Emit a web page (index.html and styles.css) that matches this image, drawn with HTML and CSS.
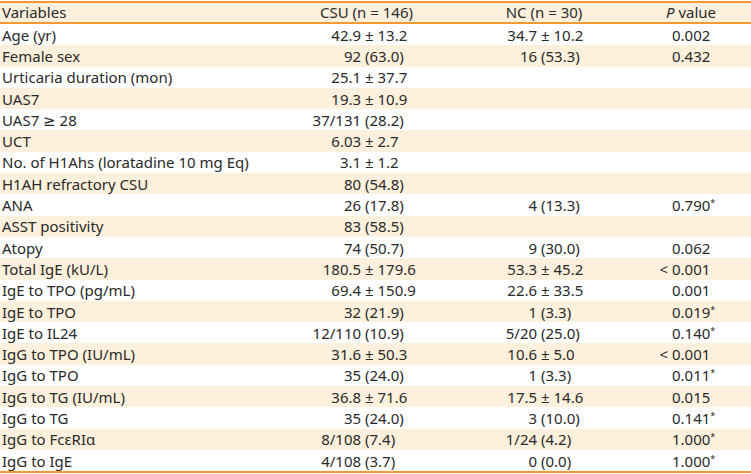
FILE: index.html
```html
<!DOCTYPE html>
<html>
<head>
<meta charset="utf-8">
<link rel="stylesheet" href="styles.css">
</head>
<body>
<div class="table">
  <div class="row head">
    <div class="cell var">Variables</div>
    <div class="cell hc">CSU (n = 146)</div>
    <div class="cell hc">NC (n = 30)</div>
    <div class="cell hc"><i>P</i> value</div>
  </div>
  <div class="row"><div class="cell var">Age (yr)</div><div class="cell csu"><span class="l">42.9 </span><span class="r">± 13.2</span></div><div class="cell nc"><span class="l">34.7 </span><span class="r">± 10.2</span></div><div class="cell pv"><span class="l"></span><span class="r">0.002</span></div></div>
  <div class="row alt"><div class="cell var">Female sex</div><div class="cell csu"><span class="l">92 </span><span class="r">(63.0)</span></div><div class="cell nc"><span class="l">16 </span><span class="r">(53.3)</span></div><div class="cell pv"><span class="l"></span><span class="r">0.432</span></div></div>
  <div class="row"><div class="cell var">Urticaria duration (mon)</div><div class="cell csu"><span class="l">25.1 </span><span class="r">± 37.7</span></div><div class="cell nc"></div><div class="cell pv"></div></div>
  <div class="row alt"><div class="cell var">UAS7</div><div class="cell csu"><span class="l">19.3 </span><span class="r">± 10.9</span></div><div class="cell nc"></div><div class="cell pv"></div></div>
  <div class="row"><div class="cell var">UAS7 ≥ 28</div><div class="cell csu"><span class="l">37/131 </span><span class="r">(28.2)</span></div><div class="cell nc"></div><div class="cell pv"></div></div>
  <div class="row alt"><div class="cell var">UCT</div><div class="cell csu"><span class="l">6.03 </span><span class="r">± 2.7</span></div><div class="cell nc"></div><div class="cell pv"></div></div>
  <div class="row"><div class="cell var">No. of H1Ahs (loratadine 10 mg Eq)</div><div class="cell csu"><span class="l">3.1 </span><span class="r">± 1.2</span></div><div class="cell nc"></div><div class="cell pv"></div></div>
  <div class="row alt"><div class="cell var">H1AH refractory CSU</div><div class="cell csu"><span class="l">80 </span><span class="r">(54.8)</span></div><div class="cell nc"></div><div class="cell pv"></div></div>
  <div class="row"><div class="cell var">ANA</div><div class="cell csu"><span class="l">26 </span><span class="r">(17.8)</span></div><div class="cell nc"><span class="l">4 </span><span class="r">(13.3)</span></div><div class="cell pv"><span class="l"></span><span class="r">0.790<sup>*</sup></span></div></div>
  <div class="row alt"><div class="cell var">ASST positivity</div><div class="cell csu"><span class="l">83 </span><span class="r">(58.5)</span></div><div class="cell nc"></div><div class="cell pv"></div></div>
  <div class="row"><div class="cell var">Atopy</div><div class="cell csu"><span class="l">74 </span><span class="r">(50.7)</span></div><div class="cell nc"><span class="l">9 </span><span class="r">(30.0)</span></div><div class="cell pv"><span class="l"></span><span class="r">0.062</span></div></div>
  <div class="row alt"><div class="cell var">Total IgE (kU/L)</div><div class="cell csu"><span class="l">180.5 </span><span class="r">± 179.6</span></div><div class="cell nc"><span class="l">53.3 </span><span class="r">± 45.2</span></div><div class="cell pv"><span class="l">&lt; </span><span class="r">0.001</span></div></div>
  <div class="row"><div class="cell var">IgE to TPO (pg/mL)</div><div class="cell csu"><span class="l">69.4 </span><span class="r">± 150.9</span></div><div class="cell nc"><span class="l">22.6 </span><span class="r">± 33.5</span></div><div class="cell pv"><span class="l"></span><span class="r">0.001</span></div></div>
  <div class="row alt"><div class="cell var">IgE to TPO</div><div class="cell csu"><span class="l">32 </span><span class="r">(21.9)</span></div><div class="cell nc"><span class="l">1 </span><span class="r">(3.3)</span></div><div class="cell pv"><span class="l"></span><span class="r">0.019<sup>*</sup></span></div></div>
  <div class="row"><div class="cell var">IgE to IL24</div><div class="cell csu"><span class="l">12/110 </span><span class="r">(10.9)</span></div><div class="cell nc"><span class="l">5/20 </span><span class="r">(25.0)</span></div><div class="cell pv"><span class="l"></span><span class="r">0.140<sup>*</sup></span></div></div>
  <div class="row alt"><div class="cell var">IgG to TPO (IU/mL)</div><div class="cell csu"><span class="l">31.6 </span><span class="r">± 50.3</span></div><div class="cell nc"><span class="l">10.6 </span><span class="r">± 5.0</span></div><div class="cell pv"><span class="l">&lt; </span><span class="r">0.001</span></div></div>
  <div class="row"><div class="cell var">IgG to TPO</div><div class="cell csu"><span class="l">35 </span><span class="r">(24.0)</span></div><div class="cell nc"><span class="l">1 </span><span class="r">(3.3)</span></div><div class="cell pv"><span class="l"></span><span class="r">0.011<sup>*</sup></span></div></div>
  <div class="row alt"><div class="cell var">IgG to TG (IU/mL)</div><div class="cell csu"><span class="l">36.8 </span><span class="r">± 71.6</span></div><div class="cell nc"><span class="l">17.5 </span><span class="r">± 14.6</span></div><div class="cell pv"><span class="l"></span><span class="r">0.015</span></div></div>
  <div class="row"><div class="cell var">IgG to TG</div><div class="cell csu"><span class="l">35 </span><span class="r">(24.0)</span></div><div class="cell nc"><span class="l">3 </span><span class="r">(10.0)</span></div><div class="cell pv"><span class="l"></span><span class="r">0.141<sup>*</sup></span></div></div>
  <div class="row alt"><div class="cell var">IgG to FcεRIα</div><div class="cell csu"><span class="l">8/108 </span><span class="r">(7.4)</span></div><div class="cell nc"><span class="l">1/24 </span><span class="r">(4.2)</span></div><div class="cell pv"><span class="l"></span><span class="r">1.000<sup>*</sup></span></div></div>
  <div class="row"><div class="cell var">IgG to IgE</div><div class="cell csu"><span class="l">4/108 </span><span class="r">(3.7)</span></div><div class="cell nc"><span class="l">0 </span><span class="r">(0.0)</span></div><div class="cell pv"><span class="l"></span><span class="r">1.000<sup>*</sup></span></div></div>
</div>
</body>
</html>
```
FILE: styles.css
```css
html, body {
  margin: 0;
  padding: 0;
  background: #ffffff;
}
body {
  font-family: "Noto Sans", "DejaVu Sans", sans-serif;
  font-size: 15px;
  color: #2a2a2a;
}
.table {
  margin-top: 1px;
  border-top: 2px solid #f39a32;
  border-bottom: 2px solid #f39a32;
  width: 751px;
}
.row {
  display: grid;
  grid-template-columns: 276px 181px 174px 120px;
  height: 21.3px;
  align-items: center;
  white-space: nowrap;
}
.row.head {
  height: 19px;
  background: #fdf0dc;
  border-bottom: 2px solid #f39a32;
}
.row.head .cell {
  line-height: 17px;
}
.row.alt {
  background: #fdf0dc;
}
.cell {
  line-height: 20px;
}
.cell.var {
  padding-left: 2px;
}
.cell.hc {
  text-align: center;
}
.cell.csu, .cell.nc, .cell.pv {
  display: grid;
}
.cell.csu { grid-template-columns: 89px 1fr; }
.cell.nc { grid-template-columns: 84px 1fr; }
.cell.pv { grid-template-columns: 41px 1fr; }
.l {
  text-align: right;
  white-space: pre;
}
.r {
  text-align: left;
  white-space: pre;
}
sup {
  font-size: 9px;
  line-height: 0;
  vertical-align: 5px;
}
```
